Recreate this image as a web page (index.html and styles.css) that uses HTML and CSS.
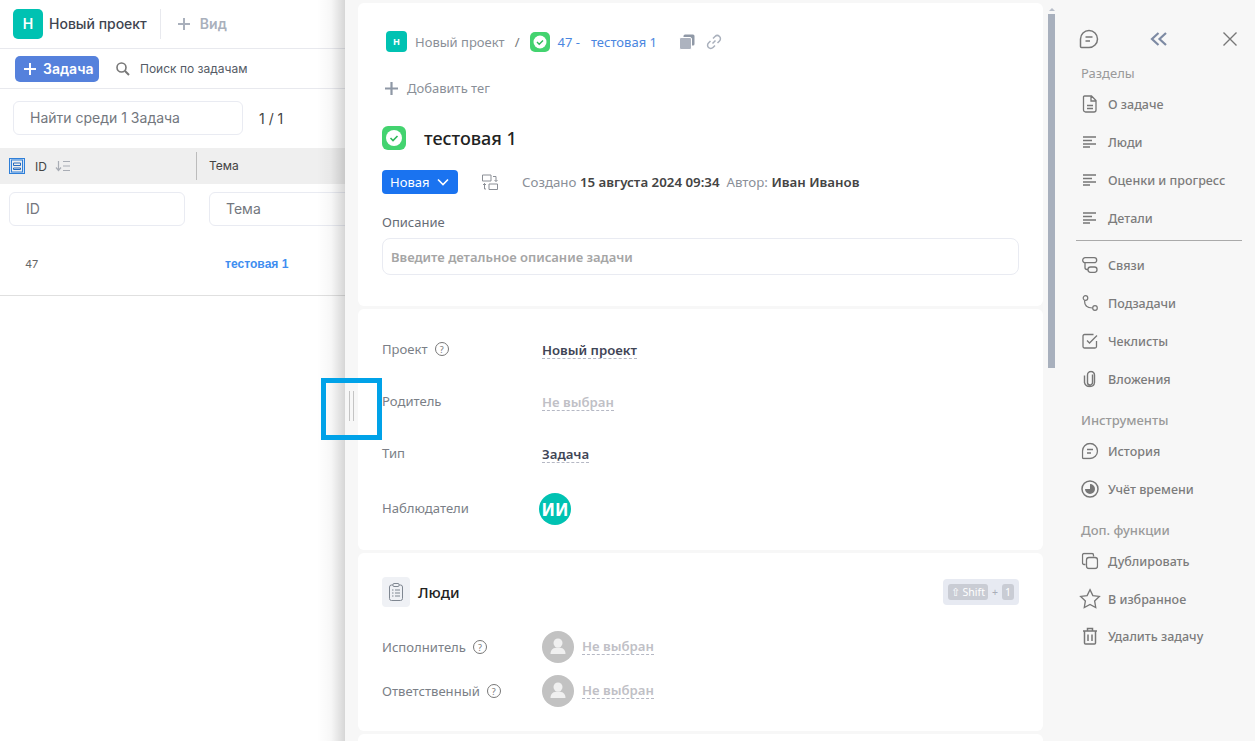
FILE: index.html
```html
<!DOCTYPE html>
<html lang="ru">

<head>
    <meta charset="UTF-8">
    <title>тестовая 1</title>
    <link rel="stylesheet" href="styles.css">
</head>

<body>
    <!-- список задач -->
    <section class="list-page">
        <div class="top-bar">
            <span class="project-logo">Н</span>
            <span class="project-name">Новый проект</span>
            <span class="top-sep"></span>
            <svg class="view-plus" width="14" height="14" viewBox="0 0 14 14"><path d="M7 1v12M1 7h12" stroke="#a9b0bc" stroke-width="2"/></svg>
            <span class="view-name">Вид</span>
        </div>
        <div class="tool-bar">
            <button class="add-btn"><svg width="14" height="14" viewBox="0 0 14 14"><path d="M7 1v12M1 7h12" stroke="#fff" stroke-width="2"/></svg>Задача</button>
            <svg class="search-icon" width="16" height="16" viewBox="0 0 16 16"><circle cx="6.5" cy="6.5" r="4.5" fill="none" stroke="#777" stroke-width="1.6"/><path d="M10 10l4 4" stroke="#777" stroke-width="2"/></svg>
            <span class="search-text">Поиск по задачам</span>
        </div>
        <div class="find-row">
            <div class="find-input">Найти среди 1 Задача</div>
            <span class="find-count">1 / 1</span>
        </div>
        <div class="table-head">
            <div class="cell-id">
                <svg width="16" height="16" viewBox="0 0 16 16"><rect x="0.500" y="0.500" width="15" height="15" fill="#cfe0f5" stroke="#2f7fd8"/><rect x="2.500" y="2" width="11" height="12" fill="#efefef" stroke="#2f7fd8"/><path d="M4.500 5h7v2.500h-7zM4.500 10h7v1.500h-7z" fill="none" stroke="#2569bd"/></svg>
                <span>ID</span>
                <svg width="16" height="12" viewBox="0 0 16 12"><path d="M3.500 1v9M1 7.500l2.500 3 2.500-3M8 1.500h7M8 6h7M8 10.500h7" fill="none" stroke="#a9adb5" stroke-width="1.200"/></svg>
            </div>
            <div class="cell-topic">Тема</div>
        </div>
        <div class="filter-row">
            <div class="filter-input filter-id">ID</div>
            <div class="filter-input filter-topic">Тема</div>
        </div>
        <div class="table-row">
            <span class="row-id">47</span>
            <a class="row-topic">тестовая 1</a>
        </div>
    </section>

    <!-- карточка задачи -->
    <aside class="panel">
        <div class="panel-shadow"></div>
        <div class="panel-main">
            <div class="card card-head">
                <div class="crumbs">
                    <span class="crumb-logo">Н</span>
                    <span class="crumb-project">Новый проект</span>
                    <span class="crumb-slash">/</span>
                    <svg class="type-icon" width="20" height="20" viewBox="0 0 20 20"><rect width="20" height="20" rx="5" fill="#43d36f"/><circle cx="10" cy="10" r="6.500" fill="#fff"/><path d="M7 10l2.200 2.200L13 8.500" fill="none" stroke="#2fb85a" stroke-width="1.400"/></svg>
                    <a class="crumb-task">47 -<span class="crumb-name">тестовая 1</span></a>
                    <svg class="crumb-copy" width="16" height="16" viewBox="0 0 16 16"><rect x="4.500" y="0.500" width="11" height="11" rx="1.500" fill="#8f98a6"/><rect x="0.500" y="3.500" width="12" height="12" rx="1.500" fill="#adb3bf" stroke="#fff"/></svg>
                    <svg class="crumb-link" width="16" height="16" viewBox="0 0 16 16"><path d="M6.500 9.500l3-3M7 4.500l2-2a2.800 2.800 0 0 1 4.500 4.500l-2 2M9 11.500l-2 2a2.800 2.800 0 0 1-4.500-4.500l2-2" fill="none" stroke="#a9b0bc" stroke-width="1.500"/></svg>
                </div>
                <div class="add-tag">
                    <svg width="15" height="15" viewBox="0 0 15 15"><path d="M7.500 1v13M1 7.500h13" stroke="#8f98a6" stroke-width="2.200"/></svg>
                    <span>Добавить тег</span>
                </div>
                <div class="task-title">
                    <svg width="24" height="24" viewBox="0 0 24 24"><rect width="24" height="24" rx="6" fill="#43d36f"/><circle cx="12" cy="12" r="8" fill="#fff"/><path d="M8.500 12l2.500 2.500 4.500-4.500" fill="none" stroke="#2fb85a" stroke-width="1.600"/></svg>
                    <h1>тестовая 1</h1>
                </div>
                <div class="status-row">
                    <button class="status-btn">Новая<svg width="12" height="8" viewBox="0 0 12 8"><path d="M1 1.500l5 5 5-5" fill="none" stroke="#fff" stroke-width="1.600"/></svg></button>
                    <svg class="status-swap" width="16" height="16" viewBox="0 0 16 16"><path d="M0.500 1h8.500v6H0.500zM7 10h8.500v5.500H7zM11 2.500h3v5M12.500 6l1.500 1.500L15.500 6M4 15H2.500V9.500M1 11l1.500-1.500L4 11" fill="none" stroke="#8b8f96"/></svg>
                    <span class="created">Создано <b>15 августа 2024 09:34</b>&nbsp; Автор: <b>Иван Иванов</b></span>
                </div>
                <div class="desc-label">Описание</div>
                <div class="desc-input">Введите детальное описание задачи</div>
            </div>

            <div class="card card-props">
                <div class="prop-row">
                    <div class="prop-name">Проект <span class="help">?</span></div>
                    <span class="prop-value">Новый проект</span>
                </div>
                <div class="prop-row">
                    <div class="prop-name">Родитель</div>
                    <span class="prop-value prop-empty">Не выбран</span>
                </div>
                <div class="prop-row">
                    <div class="prop-name">Тип</div>
                    <span class="prop-value">Задача</span>
                </div>
                <div class="prop-row prop-watchers">
                    <div class="prop-name">Наблюдатели</div>
                    <span class="avatar">ИИ</span>
                </div>
            </div>

            <div class="card card-people">
                <div class="people-head">
                    <span class="people-icon">
                        <svg width="14" height="18" viewBox="0 0 14 18"><rect x="0.500" y="2" width="13" height="15.500" rx="2" fill="none" stroke="#7f8791"/><rect x="4" y="0.500" width="6" height="3" rx="1" fill="#eff1f5" stroke="#7f8791"/><path d="M3 7h1.500M6 7h5M3 10h1.500M6 10h5M3 13h1.500M6 13h5" stroke="#7f8791"/></svg>
                    </span>
                    <h2>Люди</h2>
                    <div class="hotkey"><span class="key">⇧ Shift</span><span class="key-plus">+</span><span class="key">1</span></div>
                </div>
                <div class="person-row">
                    <div class="prop-name">Исполнитель <span class="help">?</span></div>
                    <span class="person-avatar"><svg width="32" height="32" viewBox="0 0 32 32"><circle cx="16" cy="12" r="4.500" fill="#f0f0f0"/><path d="M8.500 23c0-4.500 3-6.500 7.500-6.500s7.500 2 7.500 6.500z" fill="#f0f0f0"/></svg></span>
                    <span class="prop-value prop-empty">Не выбран</span>
                </div>
                <div class="person-row">
                    <div class="prop-name">Ответственный <span class="help">?</span></div>
                    <span class="person-avatar"><svg width="32" height="32" viewBox="0 0 32 32"><circle cx="16" cy="12" r="4.500" fill="#f0f0f0"/><path d="M8.500 23c0-4.500 3-6.500 7.500-6.500s7.500 2 7.500 6.500z" fill="#f0f0f0"/></svg></span>
                    <span class="prop-value prop-empty">Не выбран</span>
                </div>
            </div>

            <div class="card card-next"></div>
        </div>

        <div class="scroll-track"><div class="scroll-arrow"></div><div class="scroll-thumb"></div></div>

        <nav class="side">
            <div class="side-top">
                <svg width="20" height="20" viewBox="0 0 20 20"><path d="M10 1.500a8.500 8.500 0 1 1 0 17H2.500a1 1 0 0 1-1-1V10A8.500 8.500 0 0 1 10 1.500zM6.500 8h7M6.500 12h4.500" fill="none" stroke="#777" stroke-width="1.500"/></svg>
                <svg width="18" height="14" viewBox="0 0 18 14"><path d="M8.500 1L2 7l6.500 6M16 1L9.500 7l6.500 6" fill="none" stroke="#7d8aa3" stroke-width="2.200"/></svg>
                <svg width="16" height="16" viewBox="0 0 16 16"><path d="M1.500 1.500l13 13M14.500 1.500l-13 13" stroke="#777" stroke-width="1.400"/></svg>
            </div>
            <div class="side-title">Разделы</div>
            <a class="side-item"><svg width="16" height="18" viewBox="0 0 16 18"><path d="M2.500 1h7l4.500 4.500V15a2 2 0 0 1-2 2H3.500a2 2 0 0 1-2-2V2a1 1 0 0 1 1-1zM9 1v5h5M5 10.500h6M5 13.500h6" fill="none" stroke="#777" stroke-width="1.300"/></svg>О задаче</a>
            <a class="side-item"><svg width="16" height="14" viewBox="0 0 16 14"><path d="M1 2h13M1 5.500h9M1 9h13M1 12h7" stroke="#777" stroke-width="1.300"/></svg>Люди</a>
            <a class="side-item"><svg width="16" height="14" viewBox="0 0 16 14"><path d="M1 2h13M1 5.500h9M1 9h13M1 12h7" stroke="#777" stroke-width="1.300"/></svg>Оценки и прогресс</a>
            <a class="side-item"><svg width="16" height="14" viewBox="0 0 16 14"><path d="M1 2h13M1 5.500h9M1 9h13M1 12h7" stroke="#777" stroke-width="1.300"/></svg>Детали</a>
            <div class="side-line"></div>
            <a class="side-item"><svg width="16" height="16" viewBox="0 0 16 16"><rect x="0.700" y="0.700" width="14" height="5" rx="2.500" fill="none" stroke="#777" stroke-width="1.300"/><rect x="6" y="10" width="9" height="5.300" rx="2.500" fill="none" stroke="#777" stroke-width="1.300"/><path d="M3 6v4.500a2 2 0 0 0 2 2h1" fill="none" stroke="#777" stroke-width="1.300"/></svg>Связи</a>
            <a class="side-item"><svg width="16" height="16" viewBox="0 0 16 16"><circle cx="3.500" cy="3" r="2.300" fill="none" stroke="#777" stroke-width="1.200"/><circle cx="13" cy="13" r="2.300" fill="none" stroke="#777" stroke-width="1.200"/><path d="M2.500 5.500c0 5 2 7.500 8 7.500" fill="none" stroke="#777" stroke-width="1.200"/></svg>Подзадачи</a>
            <a class="side-item"><svg width="16" height="16" viewBox="0 0 16 16"><path d="M14.500 8v5.500a1.500 1.500 0 0 1-1.500 1.500H2.500A1.500 1.500 0 0 1 1 13.500V3a1.500 1.500 0 0 1 1.500-1.500h9M5 7.500l2.500 2.500L15 2.500" fill="none" stroke="#777" stroke-width="1.300"/></svg>Чеклисты</a>
            <a class="side-item"><svg width="16" height="17" viewBox="0 0 16 17"><path d="M10.500 4v8a2.500 2.500 0 0 1-5 0V4.500a3.500 3.500 0 0 1 7 0V12a4.500 4.500 0 0 1-4.500 4A5 5 0 0 1 2.500 12V5" fill="none" stroke="#777" stroke-width="1.400"/></svg>Вложения</a>
            <div class="side-title side-title-next">Инструменты</div>
            <a class="side-item"><svg width="17" height="17" viewBox="0 0 17 17"><path d="M8.500 1a7.500 7.500 0 1 1 0 15H2a1 1 0 0 1-1-1V8.500A7.500 7.500 0 0 1 8.500 1zM5.500 7h6M5.500 10.500h4" fill="none" stroke="#777" stroke-width="1.300"/></svg>История</a>
            <a class="side-item"><svg width="18" height="18" viewBox="0 0 18 18"><circle cx="9" cy="9" r="8" fill="none" stroke="#777" stroke-width="1.500"/><path d="M9 4a5 5 0 1 1-5 5h5z" fill="#777"/></svg>Учёт времени</a>
            <div class="side-title side-title-next">Доп. функции</div>
            <a class="side-item"><svg width="17" height="17" viewBox="0 0 17 17"><path d="M4 12H2.500A1.500 1.500 0 0 1 1 10.500v-8A1.500 1.500 0 0 1 2.500 1h8A1.500 1.500 0 0 1 12 2.500V4" fill="none" stroke="#777" stroke-width="1.300"/><rect x="5" y="5" width="11" height="11" rx="2.500" fill="none" stroke="#777" stroke-width="1.300"/></svg>Дублировать</a>
            <a class="side-item"><svg width="22" height="22" viewBox="0 0 20 20"><path d="M10 1.500l2.600 5.400 5.900.8-4.300 4.100 1 5.900-5.200-2.800-5.200 2.800 1-5.900-4.300-4.100 5.900-.8z" fill="none" stroke="#777" stroke-width="1.200"/></svg>В избранное</a>
            <a class="side-item side-item-last"><svg width="16" height="18" viewBox="0 0 16 18"><path d="M1 4h14M5.500 4V1.500h5V4M2.500 4v12a1 1 0 0 0 1 1h9a1 1 0 0 0 1-1V4M6 7.500v6.500M10 7.500v6.500" fill="none" stroke="#777" stroke-width="1.500"/></svg>Удалить задачу</a>
        </nav>
    </aside>

    <!-- ручка изменения ширины -->
    <div class="handle-mark"><span class="handle-lines"></span></div>
</body>

</html>
```
FILE: styles.css
```css
* {
    box-sizing: border-box;
}

html,
body {
    height: 100%;
}

body {
    margin: 0;
    overflow: hidden;
    background-color: #fff;
    color: #333;
    font-family: "Inter", "Noto Sans", sans-serif;
}

.list-page {
    width: 400px;
}

.top-bar {
    display: flex;
    align-items: center;
    height: 49px;
    padding: 0 0 1px 13px;
    border-bottom: 1px solid #e8e9ee;
}

.project-logo {
    display: flex;
    align-items: center;
    justify-content: center;
    width: 30px;
    height: 30px;
    border-radius: 5px;
    background-color: #00c2b2;
    color: #fff;
    font-size: 14px;
    font-weight: 600;
}

.project-name {
    margin-left: 6px;
    color: #3f4550;
    font-size: 14px;
    font-weight: 500;
}

.top-sep {
    width: 1px;
    height: 30px;
    margin: 0 16px 0 13px;
    background-color: #e8e9ee;
}

.view-name {
    margin-left: 9px;
    color: #a9b0bc;
    font-size: 14px;
    font-weight: 600;
}

.tool-bar {
    display: flex;
    align-items: center;
    height: 40px;
    padding-left: 15px;
    border-bottom: 1px solid #e8e9ee;
}

.add-btn {
    display: flex;
    align-items: center;
    gap: 6px;
    width: 84px;
    height: 26px;
    padding: 0 0 0 8px;
    border: 0;
    border-radius: 5px;
    background-color: #5581dc;
    color: #fff;
    font-family: inherit;
    font-size: 14px;
    font-weight: 600;
}

.search-icon {
    margin-left: 16px;
}

.search-text {
    margin-left: 9px;
    color: #555b66;
    font-size: 12px;
}

.find-row {
    display: flex;
    align-items: center;
    height: 59px;
    padding: 0 0 1px 13px;
}

.find-input {
    width: 230px;
    height: 34px;
    padding-left: 16px;
    border: 1px solid #e9ebf2;
    border-radius: 6px;
    color: #73777e;
    font-size: 14px;
    line-height: 32px;
}

.find-count {
    margin-left: 16px;
    color: #444;
    font-size: 14px;
}

.table-head {
    display: flex;
    align-items: center;
    height: 36px;
    background-color: #efefef;
    color: #444;
    font-size: 12px;
}

.cell-id {
    display: flex;
    align-items: center;
    width: 197px;
    height: 28px;
    padding-left: 9px;
    border-right: 1px solid #bcbcbc;
}

.cell-id span {
    margin: 0 8px 0 10px;
}

.cell-topic {
    padding: 0 0 2px 12px;
}

.filter-row {
    display: flex;
    gap: 24px;
    height: 44px;
    padding: 8px 0 0 9px;
}

.filter-input {
    height: 34px;
    border: 1px solid #e9ebf2;
    border-radius: 6px;
    color: #73777e;
    font-size: 14px;
    line-height: 32px;
}

.filter-id {
    width: 176px;
    padding-left: 16px;
}

.filter-topic {
    width: 180px;
    padding-left: 16px;
}

.table-row {
    display: flex;
    align-items: center;
    height: 68px;
    padding-top: 5px;
    border-bottom: 1px solid #e0e0e0;
    font-size: 12.1px;
}

.row-id {
    width: 225px;
    padding-left: 25px;
    color: #666;
    font-size: 11px;
}

.row-topic {
    color: #3f8ef0;
    font-family: "Liberation Sans", sans-serif;
    font-weight: 700;
}

/* карточка поверх списка */
.panel {
    position: absolute;
    top: 0;
    right: 0;
    bottom: 0;
    left: 345px;
    display: flex;
    background-color: #f7f7f7;
    font-family: "Noto Sans", sans-serif;
}

.panel-shadow {
    position: absolute;
    top: 0;
    bottom: 0;
    left: -28px;
    width: 28px;
    background: linear-gradient(to right, rgba(0, 0, 0, 0), rgba(0, 0, 0, 0.03) 50%, rgba(0, 0, 0, 0.16));
}

.panel-main {
    display: flex;
    flex-direction: column;
    gap: 3px;
    width: 698px;
    height: 741px;
    padding: 3px 0 0 13px;
    overflow: hidden;
}

.card {
    flex-shrink: 0;
    width: 685px;
    border-radius: 6px;
    background-color: #fff;
}

.card-head {
    height: 303px;
    padding: 28px 24px 0;
}

.crumbs {
    display: flex;
    align-items: center;
    height: 21px;
    padding-left: 4px;
    font-size: 13px;
}

.crumb-logo {
    display: flex;
    align-items: center;
    justify-content: center;
    width: 21px;
    height: 21px;
    border-radius: 4px;
    background-color: #00c2b2;
    color: #fff;
    font-size: 9px;
    font-weight: 700;
}

.crumb-project {
    margin-left: 8px;
    color: #8a8f98;
}

.crumb-slash {
    margin: 0 10px;
    color: #777;
}

.crumb-task {
    margin-left: 8px;
    color: #4a86e0;
}

.crumb-name {
    margin-left: 11px;
}

.crumb-copy {
    margin-left: 22px;
}

.crumb-link {
    margin-left: 11px;
}

.add-tag {
    display: flex;
    align-items: center;
    gap: 8px;
    height: 20px;
    margin-top: 26px;
    padding-left: 2px;
    color: #8a8f98;
    font-size: 13px;
}

.task-title {
    display: flex;
    align-items: center;
    gap: 18px;
    height: 28px;
    margin-top: 26px;
}

.task-title h1 {
    margin: 0;
    color: #222;
    font-size: 18px;
    font-weight: 500;
}

.status-row {
    display: flex;
    align-items: center;
    height: 24px;
    margin-top: 18px;
    font-size: 13.3px;
}

.status-btn {
    display: flex;
    align-items: center;
    gap: 8px;
    width: 76px;
    height: 24px;
    padding: 0 0 0 8px;
    border: 0;
    border-radius: 4px;
    background-color: #1a73f0;
    color: #fff;
    font-family: inherit;
    font-size: 13px;
}

.status-swap {
    margin-left: 24px;
}

.created {
    margin-left: 24px;
    color: #8a8f98;
}

.created b {
    color: #444;
    font-weight: 600;
}

.desc-label {
    height: 18px;
    margin-top: 19px;
    color: #666c75;
    font-size: 13px;
    line-height: 18px;
}

.desc-input {
    height: 37px;
    margin-top: 7px;
    padding-left: 8px;
    border: 1px solid #e9ebf2;
    border-radius: 8px;
    color: #a5a5a5;
    font-size: 13px;
    font-weight: 600;
    line-height: 36px;
}

.card-props {
    height: 241px;
    padding: 15px 24px 0;
}

.prop-row {
    display: flex;
    align-items: center;
    height: 52px;
}

.prop-row .prop-value {
    margin-top: 2px;
}

.prop-watchers {
    height: 56px;
    margin-top: 1px;
}

.prop-name {
    display: flex;
    align-items: center;
    gap: 7px;
    width: 160px;
    flex-shrink: 0;
    padding-bottom: 2px;
    color: #7b7f87;
    font-size: 13.1px;
}

.help {
    display: inline-flex;
    align-items: center;
    justify-content: center;
    width: 14px;
    height: 14px;
    border: 1px solid #777;
    border-radius: 50%;
    color: #777;
    font-size: 9px;
}

.prop-value {
    border-bottom: 1px dashed #b5b8c4;
    color: #3f4556;
    font-size: 13.2px;
    font-weight: 600;
    line-height: 15px;
}

.prop-empty {
    color: #c0c0c6;
}

.avatar {
    display: flex;
    align-items: center;
    justify-content: center;
    width: 32px;
    height: 32px;
    margin-left: -3px;
    border-radius: 50%;
    background-color: #00c2b2;
    color: #fff;
    font-size: 17px;
    font-weight: 700;
}

.card-people {
    height: 178px;
    padding: 24px 24px 0;
}

.people-head {
    display: flex;
    align-items: center;
    height: 30px;
    margin-bottom: 24px;
}

.people-icon {
    display: flex;
    align-items: center;
    justify-content: center;
    width: 28px;
    height: 30px;
    border-radius: 4px;
    background-color: #eff1f5;
}

.people-head h2 {
    margin: 0 0 0 8px;
    color: #222;
    font-size: 15px;
    font-weight: 500;
}

.hotkey {
    display: flex;
    align-items: center;
    height: 26px;
    margin-left: auto;
    padding: 0 5px;
    border-radius: 4px;
    background-color: #e7eaf2;
    color: #fff;
    font-size: 10.5px;
}

.key {
    height: 16px;
    padding: 0 3px;
    border-radius: 3px;
    background-color: #c9ccd4;
    line-height: 16px;
}

.key-plus {
    margin: 0 4px;
    color: #a9adb8;
}

.person-row {
    display: flex;
    align-items: center;
    height: 32px;
    margin-bottom: 12px;
}

.person-row .prop-name {
    padding-bottom: 0;
}

.person-avatar {
    width: 32px;
    height: 32px;
    margin-right: 8px;
    border-radius: 50%;
    background-color: #c2c2c2;
}

.card-next {
    height: 40px;
}

.scroll-track {
    width: 12px;
    padding: 8px 0 0 5px;
}

.scroll-arrow {
    width: 0;
    height: 0;
    margin: 0 0 3px 1px;
    border-right: 3px solid transparent;
    border-bottom: 3px solid #b8bec9;
    border-left: 3px solid transparent;
}

.scroll-thumb {
    width: 7px;
    height: 354px;
    background-color: #a8b0bd;
}

.side {
    flex: 1;
    padding: 28px 13px 0 21px;
}

.side-top {
    display: flex;
    align-items: center;
    justify-content: space-between;
    height: 22px;
    padding: 0 4px 0 3px;
}

.side-top svg:nth-child(2) {
    margin-left: -4px;
}

.side-title {
    height: 18px;
    margin: 14px 0 3px 5px;
    color: #9a9a9a;
    font-size: 13px;
    line-height: 18px;
}

.side-title-next {
    margin-top: 13px;
    font-weight: 500;
}

.side-item {
    display: flex;
    align-items: center;
    height: 38px;
    padding-left: 32px;
    position: relative;
    color: #7c7c7c;
    font-size: 12.5px;
    font-weight: 500;
}

.side-item-last {
    margin-top: -1px;
}

.side-item svg {
    position: absolute;
    top: 50%;
    left: 14px;
    transform: translate(-50%, -50%);
}

.side-line {
    height: 1px;
    margin: 3px 0 5px;
    background-color: #aaa;
}

/* синяя рамка вокруг ручки */
.handle-mark {
    position: absolute;
    top: 378px;
    left: 321px;
    width: 61px;
    height: 62px;
    border: 5px solid #00a2e8;
}

.handle-lines {
    position: absolute;
    top: 8px;
    left: 23px;
    width: 5px;
    height: 30px;
    border-right: 1px solid #c4c4c4;
    border-left: 1px solid #c4c4c4;
}
```
